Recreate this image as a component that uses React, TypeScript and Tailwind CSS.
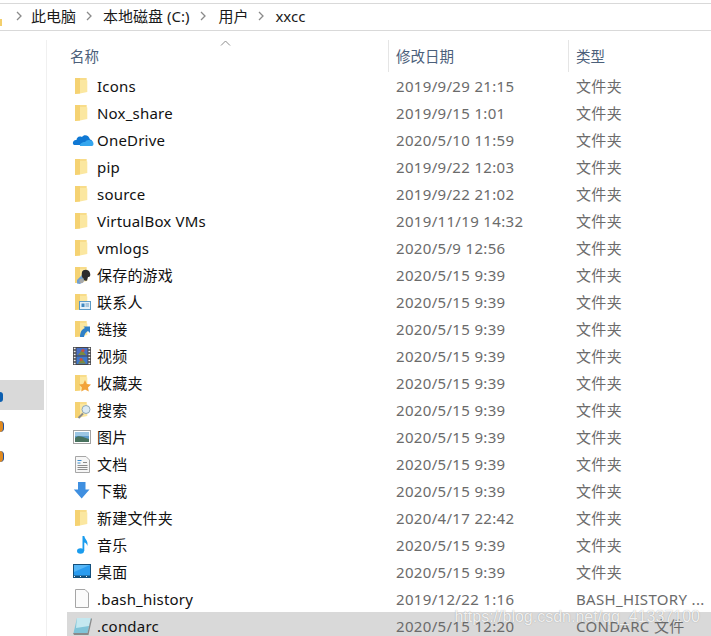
const font = "[font-family:'Noto_Sans','Noto_Sans_CJK_SC',sans-serif]";

type IconName =
  | "folder" | "onedrive" | "games" | "contacts" | "links" | "videos" | "favorites" | "search"
  | "pictures" | "documents" | "downloads" | "music" | "desktop" | "file" | "condarc";

type Row = { name: string; date: string; type: string; icon: IconName };

const rows: Row[] = [
  { name: "Icons", date: "2019/9/29 21:15", type: "文件夹", icon: "folder" },
  { name: "Nox_share", date: "2019/9/15 1:01", type: "文件夹", icon: "folder" },
  { name: "OneDrive", date: "2020/5/10 11:59", type: "文件夹", icon: "onedrive" },
  { name: "pip", date: "2019/9/22 12:03", type: "文件夹", icon: "folder" },
  { name: "source", date: "2019/9/22 21:02", type: "文件夹", icon: "folder" },
  { name: "VirtualBox VMs", date: "2019/11/19 14:32", type: "文件夹", icon: "folder" },
  { name: "vmlogs", date: "2020/5/9 12:56", type: "文件夹", icon: "folder" },
  { name: "保存的游戏", date: "2020/5/15 9:39", type: "文件夹", icon: "games" },
  { name: "联系人", date: "2020/5/15 9:39", type: "文件夹", icon: "contacts" },
  { name: "链接", date: "2020/5/15 9:39", type: "文件夹", icon: "links" },
  { name: "视频", date: "2020/5/15 9:39", type: "文件夹", icon: "videos" },
  { name: "收藏夹", date: "2020/5/15 9:39", type: "文件夹", icon: "favorites" },
  { name: "搜索", date: "2020/5/15 9:39", type: "文件夹", icon: "search" },
  { name: "图片", date: "2020/5/15 9:39", type: "文件夹", icon: "pictures" },
  { name: "文档", date: "2020/5/15 9:39", type: "文件夹", icon: "documents" },
  { name: "下载", date: "2020/5/15 9:39", type: "文件夹", icon: "downloads" },
  { name: "新建文件夹", date: "2020/4/17 22:42", type: "文件夹", icon: "folder" },
  { name: "音乐", date: "2020/5/15 9:39", type: "文件夹", icon: "music" },
  { name: "桌面", date: "2020/5/15 9:39", type: "文件夹", icon: "desktop" },
  { name: ".bash_history", date: "2019/12/22 1:16", type: "BASH_HISTORY ...", icon: "file" },
  { name: ".condarc", date: "2020/5/15 12:20", type: "CONDARC 文件", icon: "condarc" },
];

function Folder() {
  return (
    <>
      <path d="M3 4h11.500v2l.8.500V18L8 19.500 3 20z" fill="#fbe7a0" />
      <path d="M3 4h5v15.500L3 20z" fill="#f5d272" />
      <path d="M8 4h6.500v2H8z" fill="#f8dc8a" />
    </>
  );
}

function FileIcon({ name }: { name: IconName }) {
  let art = <Folder />;
  if (name === "onedrive") {
    art = (
      <>
        <path d="M3 17h11l5-1c2-1 2-4-1-4.500C17 7 12 6 10 9 6.500 7.500 4.500 10 4.500 12c-4-.5-5 5-1.500 5z" fill="#0f78d4" />
        <path d="M8 18h12c2 0 2.500-5-1.500-5.500-3-1-4 0-5.500 1.500-3 0-5.500 2-5 4z" fill="#35a6ee" />
      </>
    );
  } else if (name === "games") {
    art = (
      <>
        <Folder />
        <path d="M5 17l5-5 2 6-4 3-3-.5z" fill="#6f9fd0" />
        <path d="M10 9c1-3 7-3 8 1 1 3-.5 4.500-2 4l-1 3.500c-2 .5-3.500 0-3.500-2-2-1-2-4-1.500-6.500z" fill="#2c2c2e" />
        <circle cx="9.500" cy="18" r="2.200" fill="#a8a8a8" />
      </>
    );
  } else if (name === "contacts") {
    art = (
      <>
        <Folder />
        <rect x="7.500" y="11.500" width="11" height="8" fill="#e4f0f8" stroke="#5b9bc8" />
        <rect x="9.500" y="13.500" width="3" height="3.500" fill="#3f88c0" />
        <path d="M13.500 14h3.500M13.500 16h3.500" stroke="#6f9dc0" />
      </>
    );
  } else if (name === "links") {
    art = (
      <>
        <Folder />
        <path d="M8 20c0-5 2-8 5-9l-1.500-1.500H18V16l-2-2c-2 1-3.500 3-4 6z" fill="#2f80c8" />
      </>
    );
  } else if (name === "videos") {
    art = (
      <>
        <rect x="1" y="3" width="18" height="18" fill="#46464a" />
        <rect x="4.500" y="4" width="11" height="7.500" fill="#4a70c4" />
        <rect x="4.500" y="12.500" width="11" height="7.500" fill="#3f78cc" />
        <path d="M6 11l4-5 4 5zM6 19.500l4-5 4 5z" fill="#7c8a40" />
        <circle cx="11" cy="6.500" r="1.600" fill="#c85040" />
        <circle cx="9" cy="15.500" r="1.600" fill="#c85040" />
        <path d="M1.800 4.500h1.800M1.800 7.500h1.800M1.800 10.500h1.800M1.800 13.500h1.800M1.800 16.500h1.800M1.800 19.500h1.800M16.400 4.500h1.800M16.400 7.500h1.800M16.400 10.500h1.800M16.400 13.500h1.800M16.400 16.500h1.800M16.400 19.500h1.800" stroke="#f0f0f0" strokeWidth="1.300" />
      </>
    );
  } else if (name === "favorites") {
    art = (
      <>
        <Folder />
        <path d="M13 9l1.800 4 4.200.5-3 2.900.8 4.100-3.800-2.100-3.800 2.100.8-4.100-3-2.900 4.200-.5z" fill="#f2a33a" />
      </>
    );
  } else if (name === "search") {
    art = (
      <>
        <Folder />
        <path d="M6.500 20l4.500-4.500" stroke="#8c8c8c" strokeWidth="2" />
        <circle cx="14" cy="11.500" r="4" fill="#dcebf4" stroke="#8fa8b8" />
      </>
    );
  } else if (name === "pictures") {
    art = (
      <>
        <rect x="1.500" y="5.500" width="17" height="13" fill="#fff" stroke="#a3a3a3" />
        <rect x="3" y="7" width="14" height="10" fill="#5f9ccc" />
        <path d="M3 7h14v4H3z" fill="#9cc6e4" />
        <path d="M3 13c3-3 6-2 14 1v3H3z" fill="#48725e" />
      </>
    );
  } else if (name === "documents") {
    art = (
      <>
        <path d="M3.500 4.500H14l3.500 3.500v12.500h-14z" fill="#f6f6f6" stroke="#a6a6a6" />
        <path d="M5.500 8.500h4M5.500 11h3" stroke="#3d8fd0" strokeWidth="1.200" />
        <path d="M5.500 13.500h10M5.500 15.500h10M5.500 17.500h10M11 10.500h4" stroke="#8c8c8c" />
      </>
    );
  } else if (name === "downloads") {
    art = (
      <path d="M6 3h7.500v7.500h4L9.700 19.500 1.800 10.500h4.200z" fill="#3f8fe0" />
    );
  } else if (name === "music") {
    art = (
      <>
        <ellipse cx="8.500" cy="18" rx="3.500" ry="2.800" fill="#1a9cee" />
        <path d="M10.500 3h1.800c.3 3 4.500 5 3 10-.3-2-2-3.500-3-3.500V18h-1.800z" fill="#1a9cee" />
      </>
    );
  } else if (name === "desktop") {
    art = (
      <>
        <rect x="1" y="4" width="18" height="14" fill="#14507c" />
        <path d="M2 5h16v10.500H2z" fill="#2a9cf0" />
        <path d="M2 5h16L2 12z" fill="#56b6f6" />
        <path d="M2 16.500h16" stroke="#f0f0f0" strokeDasharray="1 5" />
      </>
    );
  } else if (name === "file") {
    art = (
      <path d="M3.500 2.500H13l3.500 3.500v14.500h-13z" fill="#fbfbfb" stroke="#a6a6a6" />
    );
  } else if (name === "condarc") {
    art = (
      <>
        <path d="M5 4h14l-3.500 15H1.500z" fill="#7fc4d8" />
        <path d="M5 4h14l-2 8-13 2z" fill="#c4e8f0" />
        <path d="M19 4l1 1-3.500 16H2l-1-2h14.500z" fill="#8a8a8a" />
      </>
    );
  }
  return (
    <svg width="24" height="24" viewBox="0 0 24 24" className="shrink-0">
      {art}
    </svg>
  );
}

function Chevron() {
  return (
    <svg width="6" height="10" viewBox="0 0 6 10" className="shrink-0">
      <path d="M1 1l4 4-4 4" fill="none" stroke="#8a8a8a" strokeWidth="1.300" />
    </svg>
  );
}

export default function App() {
  return (
    <div className={`${font} h-[636px] w-[711px] overflow-hidden bg-white`}>
      <div className="relative mt-[3px] flex h-[28px] items-center border-y border-[#d9d9d9] pb-[2px] pl-[16px] text-[15px] text-[#1a1a1a]">
        <div className="absolute left-0 top-[15px] h-[7px] w-[2px] bg-[#f3cf6c]" />
        <Chevron />
        <span className="ml-[9px]">此电脑</span>
        <span className="ml-[10px]"><Chevron /></span>
        <span className="ml-[11px]">本地磁盘 (C:)</span>
        <span className="ml-[11px]"><Chevron /></span>
        <span className="ml-[12px]">用户</span>
        <span className="ml-[10px]"><Chevron /></span>
        <span className="ml-[11px]">xxcc</span>
      </div>

      <div className="flex">
        <div className="mt-[9px] h-[596px] w-[47px] shrink-0 border-r border-[#f0f0f0]">
          <div className="mt-[340px] flex h-[30px] w-[44px] items-center bg-[#d9d9d9]">
            <div className="mt-[4px] h-[10px] w-[3px] rounded-r bg-[#0c5fb0]" />
          </div>
          <div className="mt-[11px] h-[11px] w-[4px] rounded-r border-r border-[#1c4f9c] bg-[#e08a20]" />
          <div className="mt-[19px] h-[11px] w-[4px] rounded-r border-r border-[#1c4f9c] bg-[#e08a20]" />
        </div>

        <div className="relative min-w-0 flex-1">
          <div className="relative flex h-[41px] items-end text-[14.500px] text-[#4c607a]">
            <svg width="11" height="6" viewBox="0 0 11 6" className="absolute left-[173px] top-[9px]">
              <path d="M1 5.500l4.500-4.500 4.500 4.500" fill="none" stroke="#8c8c8c" />
            </svg>
            <div className="flex h-[32px] w-[341px] items-center pl-[23px] pt-[2px]">名称</div>
            <div className="flex h-[32px] w-[180px] items-center border-l border-[#e5e5e5] pl-[7px] pt-[2px]">修改日期</div>
            <div className="flex h-[32px] flex-1 items-center border-l border-[#e5e5e5] pl-[7px] pt-[2px]">类型</div>
          </div>

          {rows.map((row, i) => (
            <div
              key={row.name}
              className={`ml-[20px] flex h-[27px] items-center ${i === rows.length - 1 ? "bg-[#d9d9d9]" : ""}`}
            >
              <div className="flex w-[321px] items-center pl-[5px]">
                <FileIcon name={row.icon} />
                <span className="ml-px mt-[2px] whitespace-nowrap text-[15px] tracking-[0.2px] text-[#111]">{row.name}</span>
              </div>
              <span className="mt-[2px] w-[180px] whitespace-nowrap pl-[8px] text-[15px] tracking-[0.33px] text-[#6b6b6b]">{row.date}</span>
              <span className="mt-[2px] whitespace-nowrap pl-[8px] text-[15px] tracking-[0.33px] text-[#6b6b6b]">{row.type}</span>
            </div>
          ))}

          <div className="absolute bottom-[14px] right-[11px] whitespace-nowrap font-['Liberation_Sans',sans-serif] text-[16px] leading-none text-white/85 [text-shadow:0_0_1px_rgba(0,0,0,0.35)]">
            https://blog.csdn.net/qq_41337100
          </div>
        </div>
      </div>
    </div>
  );
}
